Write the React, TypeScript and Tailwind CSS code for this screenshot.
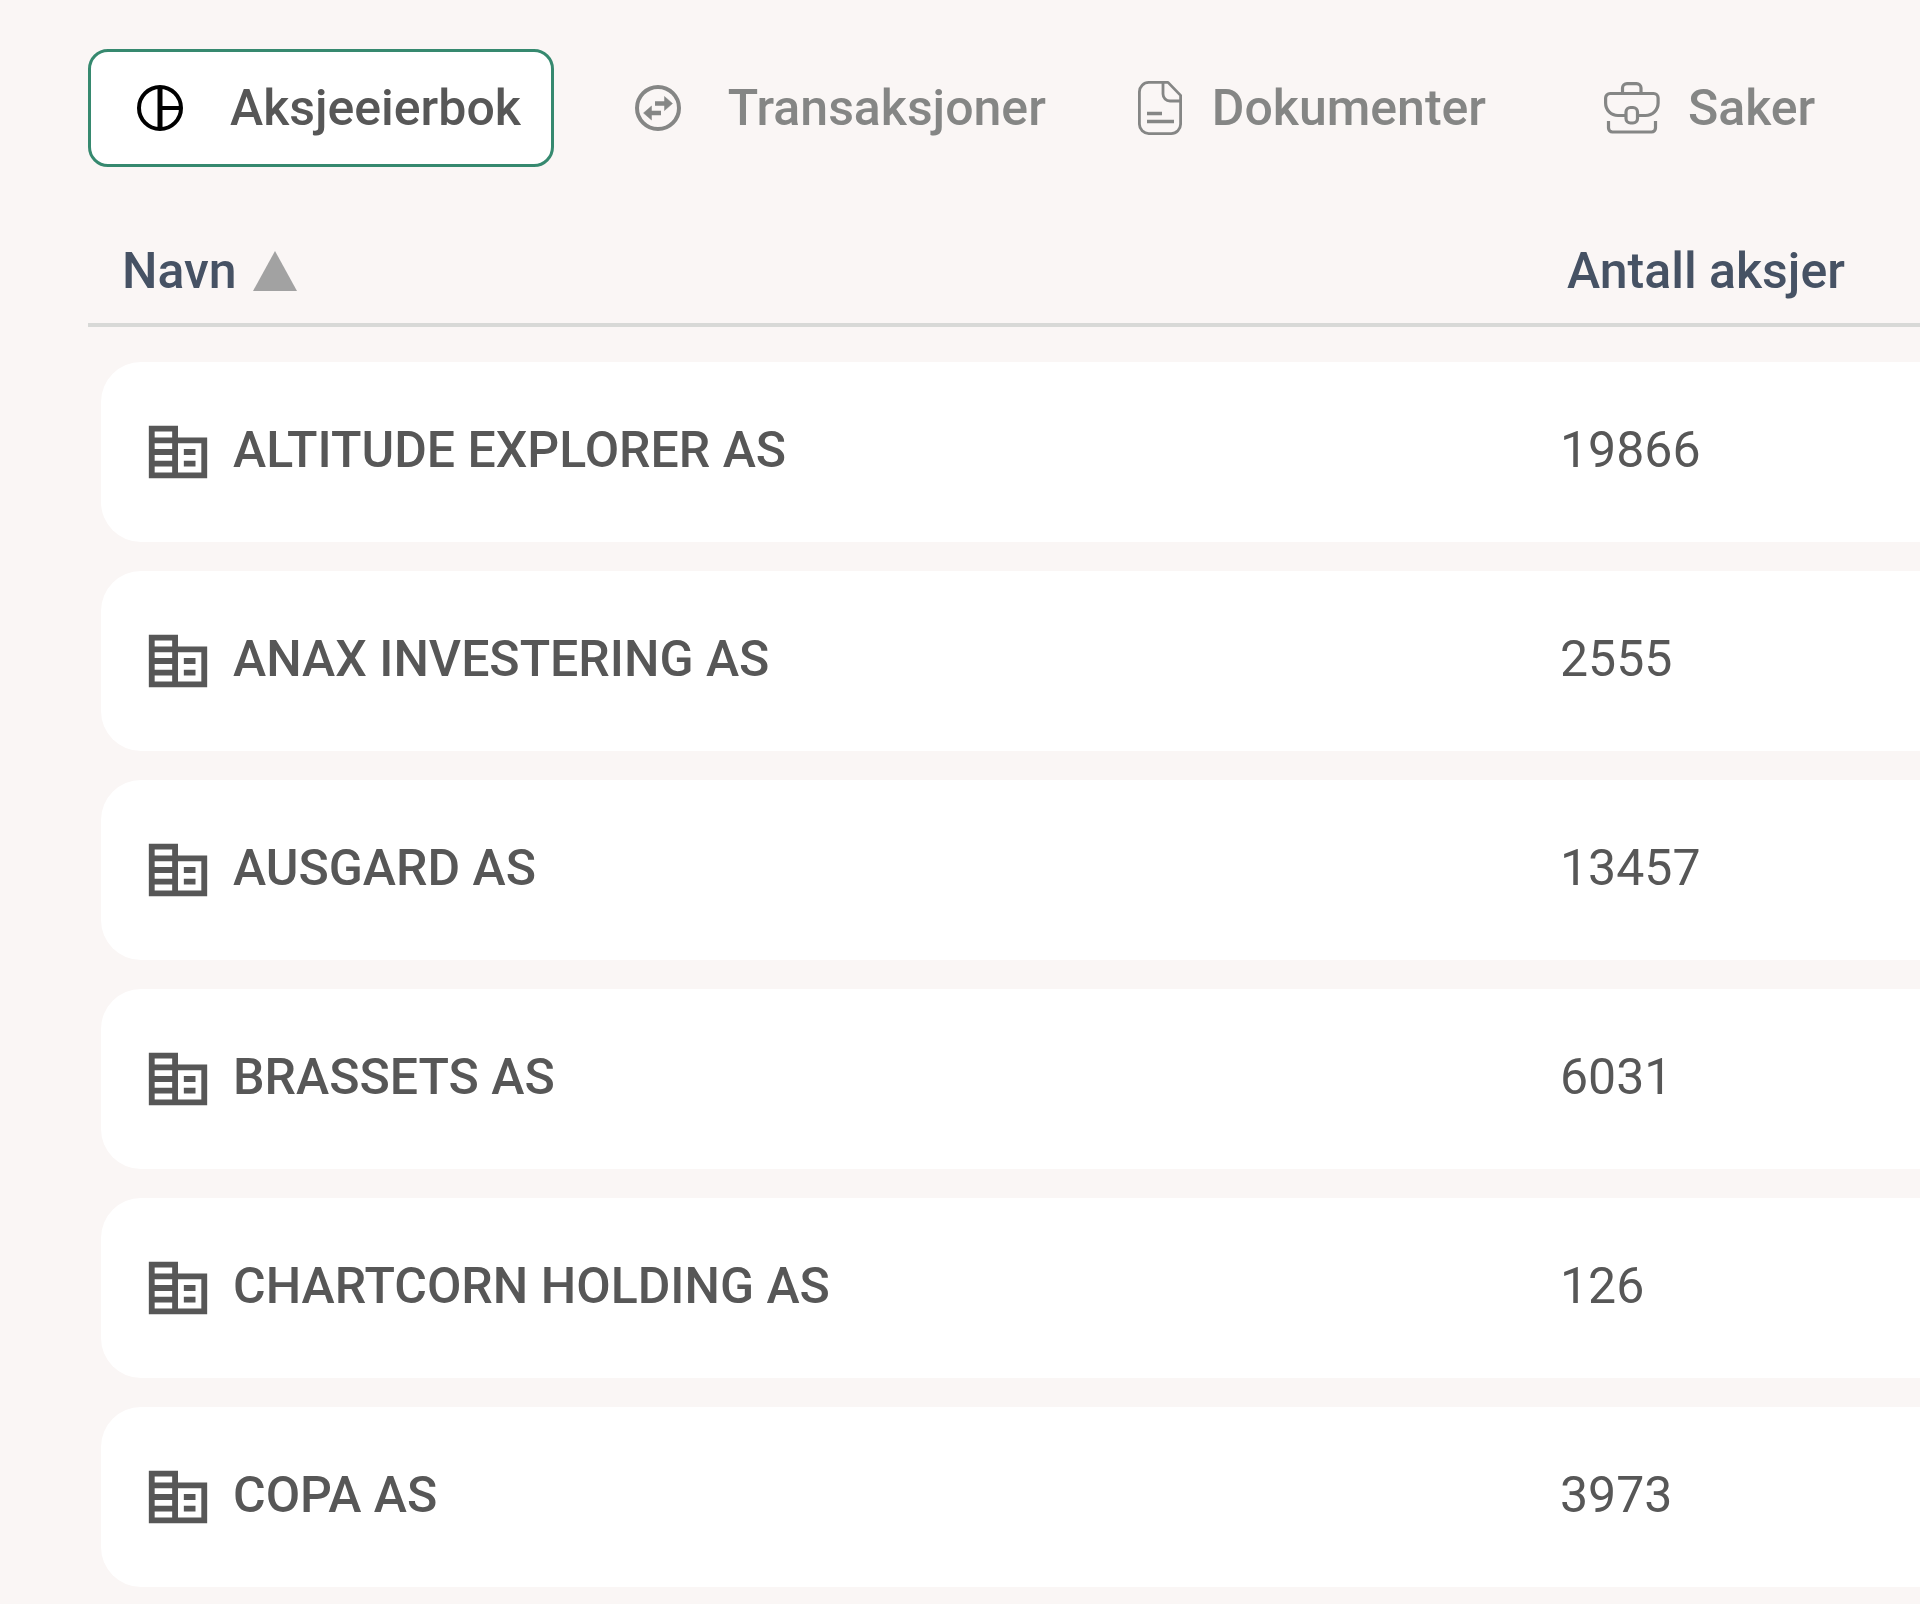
import type { ReactNode } from 'react';

const PieIcon = () => (
  <svg viewBox="0 0 56 56" className="size-14 shrink-0 text-black" fill="none" stroke="currentColor" aria-hidden="true">
    <circle cx="28" cy="28" r="21" strokeWidth="4" />
    <path d="M28 7v42" strokeWidth="5" />
    <path d="M28 28h21" strokeWidth="4" />
  </svg>
);

const SwapIcon = () => (
  <svg viewBox="0 0 56 56" className="size-14 shrink-0" fill="none" stroke="currentColor" aria-hidden="true">
    <circle cx="28" cy="28" r="21" strokeWidth="4" />
    <path d="M25 23.5h12M31 33H19" strokeWidth="4.4" />
    <path d="M34.5 16.5l8 7-8 7v-14zM21.500 26l-8 7 8 7V26z" fill="currentColor" strokeWidth="0.5" />
  </svg>
);

const DocumentIcon = () => (
  <svg
    viewBox="0 0 44 54"
    className="h-[54px] w-11 shrink-0"
    fill="none"
    stroke="currentColor"
    strokeWidth="2.8"
    strokeLinejoin="round"
    aria-hidden="true"
  >
    <path d="M11 1.4h19l12.600 13V43a9.5 9.5 0 0 1-9.500 9.600H11A9.5 9.5 0 0 1 1.4 43V11A9.5 9.5 0 0 1 11 1.4z" />
    <path d="M25 1.4V13a7 7 0 0 0 7 7h10.5" />
    <path d="M9 32.5h15M9 40.5h27" strokeWidth="3.4" />
  </svg>
);

const BriefcaseIcon = () => (
  <svg
    viewBox="0 0 56 52"
    className="h-[52px] w-14 shrink-0"
    fill="none"
    stroke="currentColor"
    strokeWidth="3.2"
    strokeLinejoin="round"
    aria-hidden="true"
  >
    <path d="M18.500 11.500V6A4.500 4.500 0 0 1 23 1.600h9.500A4.500 4.500 0 0 1 37 6v5.500" />
    <path d="M21.500 33.500H14C7 33.500 1.600 28 1.600 21v-5a4.500 4.500 0 0 1 4.500-4.500h43.500a4.500 4.500 0 0 1 4.500 4.500v5c0 7-5.500 12.500-12.500 12.500h-7.500" />
    <rect x="22" y="25.500" width="11.500" height="15.500" rx="4.500" />
    <path d="M4.500 39v7a4 4 0 0 0 4 4h39a4 4 0 0 0 4-4v-7" />
  </svg>
);

const CompanyIcon = () => (
  <svg viewBox="0 0 24 24" className="size-[70px] shrink-0" fill="currentColor" fillRule="evenodd" aria-hidden="true">
    <path d="M12 7V3H2v18h20V7H12zM4 5h6v2H4V5zm0 4h6v2H4V9zm0 4h6v2H4v-2zm0 4h6v2H4v-2zm8-8h8v10h-8V9z" />
    <path d="M14 11h4v2h-4zM14 15h4v2h-4z" />
  </svg>
);

const tabs: { label: string; icon: ReactNode; spacing: string; active?: boolean }[] = [
  { label: 'Aksjeeierbok', icon: <PieIcon />, spacing: 'gap-[42px] pl-[41px]', active: true },
  { label: 'Transaksjoner', icon: <SwapIcon />, spacing: 'gap-[42px] pl-[41px]' },
  { label: 'Dokumenter', icon: <DocumentIcon />, spacing: 'gap-[30px] pl-6' },
  { label: 'Saker', icon: <BriefcaseIcon />, spacing: 'gap-7 pl-[50px]' },
];

const shareholders = [
  { name: 'ALTITUDE EXPLORER AS', shares: 19866 },
  { name: 'ANAX INVESTERING AS', shares: 2555 },
  { name: 'AUSGARD AS', shares: 13457 },
  { name: 'BRASSETS AS', shares: 6031 },
  { name: 'CHARTCORN HOLDING AS', shares: 126 },
  { name: 'COPA AS', shares: 3973 },
];

export default function App() {
  return (
    <main className="min-h-screen bg-[#faf6f5] pt-[49px] pl-[88px] font-['Roboto',sans-serif] text-[50px] leading-[60px] text-[#575757]">
      <nav className="flex gap-8">
        {tabs.map((tab) => (
          <button
            key={tab.label}
            type="button"
            aria-current={tab.active ? 'page' : undefined}
            className={`flex h-[118px] items-center rounded-[20px] border-3 pr-[30px] font-medium whitespace-nowrap ${tab.spacing} ${
              tab.active ? 'border-[#36896f] bg-white' : 'border-transparent text-[#858685]'
            }`}
          >
            {tab.icon}
            {tab.label}
          </button>
        ))}
      </nav>

      <table className="mt-[52px] block">
        <thead className="block text-[#465264]">
          <tr className="flex h-[108px] items-center border-b-4 border-[#d8d9d7]">
            <th className="flex-1 pl-[34px] text-left font-medium" aria-sort="ascending">
              <button type="button" className="flex items-center gap-4">
                Navn
                <svg viewBox="0 0 44 40" className="h-10 w-11" fill="#a2a2a2" aria-hidden="true">
                  <path d="M22 0l22 40H0z" />
                </svg>
              </button>
            </th>
            <th className="w-[353px] text-left font-medium">Antall aksjer</th>
          </tr>
        </thead>
        <tbody className="flex flex-col gap-[29px] pt-[35px] pl-[13px]">
          {shareholders.map((holder) => (
            <tr key={holder.name} className="flex h-[180px] items-center rounded-l-[40px] bg-white">
              <td className="flex flex-1 items-center gap-5 pl-[42px] font-medium">
                <CompanyIcon />
                <span className="pb-1">{holder.name}</span>
              </td>
              <td className="w-[360px] pb-1">{holder.shares}</td>
            </tr>
          ))}
        </tbody>
      </table>
    </main>
  );
}
